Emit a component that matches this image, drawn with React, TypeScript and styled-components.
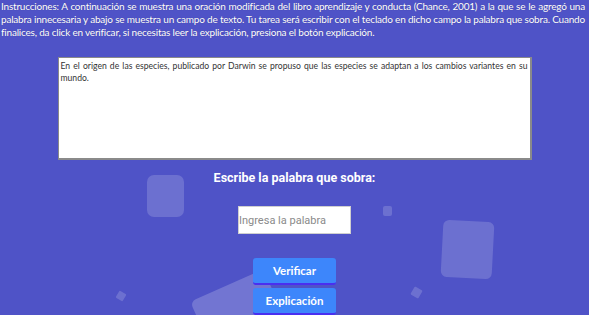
import React from "react";
import styled, { createGlobalStyle } from "styled-components";

const Global = createGlobalStyle`
  html, body { margin: 0; padding: 0; }
  body { background: #4f53c7; }
  * { box-sizing: border-box; }
`;

const Page = styled.div`
  position: relative;
  width: 589px;
  height: 315px;
  overflow: hidden;
  background: #4f53c7;
  display: flex;
  flex-direction: column;
  align-items: center;
`;

const Shape = styled.div<{ $x: number; $y: number; $w: number; $h: number; $r: number; $rad: number; $o?: number }>`
  position: absolute;
  left: ${(p) => p.$x}px;
  top: ${(p) => p.$y}px;
  width: ${(p) => p.$w}px;
  height: ${(p) => p.$h}px;
  border-radius: ${(p) => p.$rad}px;
  transform: rotate(${(p) => p.$r}deg);
  background: rgba(255, 255, 255, ${(p) => p.$o ?? 0.17});
  z-index: 0;
`;

const Instructions = styled.div`
  position: relative;
  z-index: 1;
  margin: 0;
  padding: 0 4px 0 1px;
  width: 100%;
  color: #ffffff;
  font-family: Lato, "Liberation Sans", sans-serif;
  font-size: 10px;
  letter-spacing: -0.2px;
  line-height: 13px;
  text-shadow: 0 0 1px rgba(0, 0, 0, 0.25);
`;

const Line = styled.span<{ $last?: boolean }>`
  display: block;
  white-space: nowrap;
  text-align: justify;
  text-align-last: ${(p) => (p.$last ? "left" : "justify")};
`;

const Sentence = styled.div`
  position: relative;
  z-index: 1;
  margin-top: 18px;
  width: 474px;
  height: 105px;
  background: #ffffff;
  border: 1px solid #8a8a8a;
  border-bottom-width: 2px;
  border-right-width: 2px;
  padding: 2px 2px;
  color: #333333;
  font-family: Lato, "Liberation Sans", sans-serif;
  font-size: 8.6px;
  line-height: 12px;
  text-align: justify;
`;

const Heading = styled.h2`
  position: relative;
  z-index: 1;
  margin: 10px 0 0;
  color: #ffffff;
  font-family: Roboto, "Liberation Sans", sans-serif;
  font-weight: 700;
  font-size: 12.5px;
  line-height: 16px;
`;

const WordInput = styled.input`
  position: relative;
  z-index: 1;
  margin-top: 20px;
  width: 113px;
  height: 28px;
  border: 1px solid #cfcfcf;
  background: #ffffff;
  padding: 0 0 0 0;
  font-family: Roboto, "Liberation Sans", sans-serif;
  font-size: 11px;
  color: #333;
  outline: none;
  &::placeholder { color: #8a8a8a; }
`;

const Buttons = styled.div`
  position: relative;
  z-index: 1;
  margin-top: 24px;
  display: flex;
  flex-direction: column;
  gap: 3px;
`;

const Button = styled.button`
  width: 83px;
  height: 27px;
  border: none;
  border-bottom: 2px solid #4a2ff0;
  border-radius: 3px;
  background: #3d86fb;
  color: #ffffff;
  font-family: Lato, "Liberation Sans", sans-serif;
  font-weight: 700;
  font-size: 11.5px;
  padding: 0;
  cursor: pointer;
`;

export default function App() {
  return (
    <>
      <Global />
      <Page>
        <Shape $x={147} $y={175} $w={37} $h={42} $r={0} $rad={7} />
        <Shape $x={383} $y={206} $w={9} $h={10} $r={0} $rad={2} />
        <Shape $x={442} $y={221} $w={51} $h={57} $r={3} $rad={6} />
        <Shape $x={203} $y={282} $w={80} $h={80} $r={-24} $rad={6} $o={0.2} />
        <Shape $x={117} $y={292} $w={8} $h={8} $r={30} $rad={1} />
        <Shape $x={412} $y={288} $w={9} $h={9} $r={30} $rad={1} />
        <Instructions>
          <Line>
            Instrucciones: A continuación se muestra una oración modificada del libro aprendizaje y conducta (Chance, 2001) a la que se le agregó una
          </Line>
          <Line>
            palabra innecesaria y abajo se muestra un campo de texto. Tu tarea será escribir con el teclado en dicho campo la palabra que sobra. Cuando
          </Line>
          <Line $last>
            finalices, da click en verificar, si necesitas leer la explicación, presiona el botón explicación.
          </Line>
        </Instructions>
        <Sentence>
          En el origen de las especies, publicado por Darwin se propuso que las especies se adaptan a los cambios
          variantes en su mundo.
        </Sentence>
        <Heading>Escribe la palabra que sobra:</Heading>
        <WordInput placeholder="Ingresa la palabra" />
        <Buttons>
          <Button>Verificar</Button>
          <Button>Explicación</Button>
        </Buttons>
      </Page>
    </>
  );
}
